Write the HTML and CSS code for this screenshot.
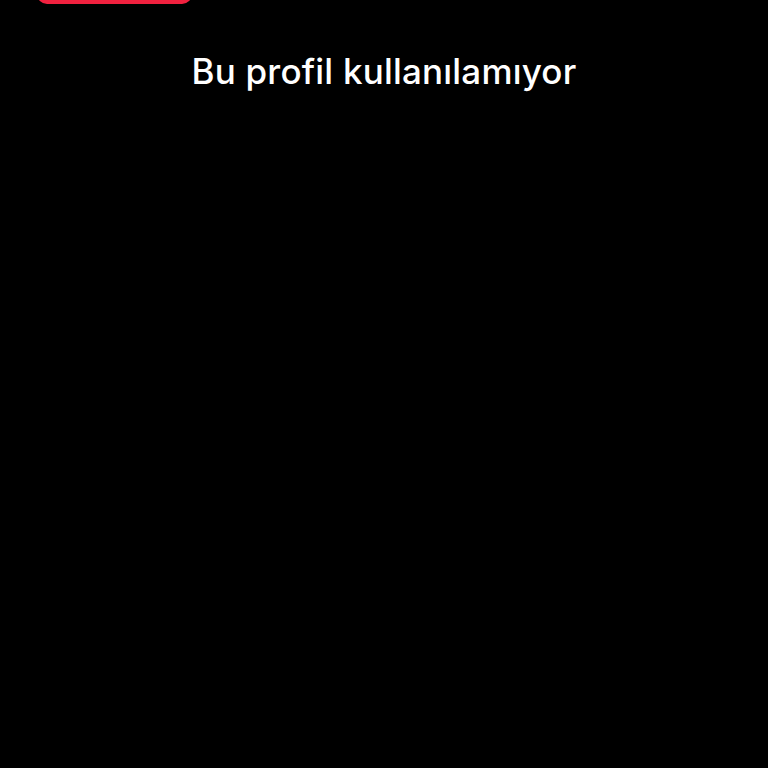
FILE: index.html
```html
<!DOCTYPE html>
<html>
<head>
<meta charset="utf-8">
<link rel="stylesheet" href="styles.css">
</head>
<body>
<div class="page">
  <div class="top">
    <div class="red-btn"></div>
  </div>
  <h1 class="title">Bu profil kullanılamıyor</h1>
</div>
</body>
</html>
```
FILE: styles.css
```css
html, body {
  margin: 0;
  padding: 0;
  background: #000;
  width: 768px;
  height: 768px;
  overflow: hidden;
}
.page {
  display: flex;
  flex-direction: column;
}
.top {
  padding-left: 37px;
}
.red-btn {
  width: 155px;
  height: 44px;
  margin-top: -40px;
  background: #f1213f;
  border-radius: 10px;
}
.title {
  margin: 47px 0 0;
  text-align: center;
  color: #fff;
  font-family: "Inter", "Noto Sans", sans-serif;
  font-weight: 500;
  font-size: 35px;
  line-height: 40px;
  letter-spacing: 0.2px;
}
```
